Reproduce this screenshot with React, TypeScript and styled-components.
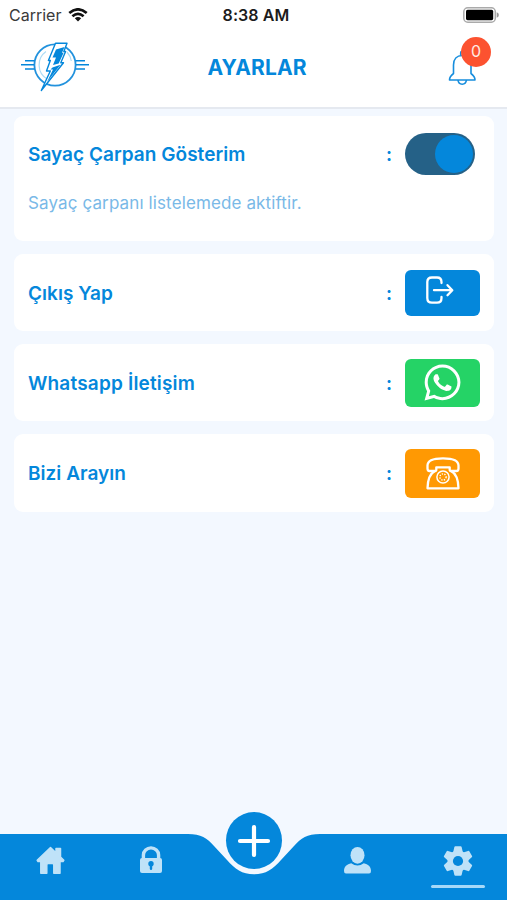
import React from "react";
import styled, { createGlobalStyle } from "styled-components";
import { FaWhatsapp } from "react-icons/fa";

const BLUE = "#0487db";
const PAGE = "#f3f8ff";
const PALE = "#bfe2f8";

const GlobalStyle = createGlobalStyle`
  *, *::before, *::after { box-sizing: border-box; }
  body { margin: 0; background: ${PAGE}; font-family: Inter, "Liberation Sans", sans-serif; }
  svg { display: block; }
`;

const Screen = styled.div`
  display: flex;
  flex-direction: column;
  width: 507px;
  height: 900px;
  overflow: hidden;
  background: ${PAGE};
`;

const StatusBar = styled.div`
  display: grid;
  grid-template-columns: 1fr auto 1fr;
  align-items: center;
  height: 28px;
  padding: 1px 8px 0 9px;
  background: #fff;
  color: #1c1c1c;
`;

const Carrier = styled.div`
  display: flex;
  align-items: center;
  gap: 7px;
  font-size: 16px;
  line-height: 20px;
  color: #3a3a3a;
`;

const Clock = styled.div`
  padding-left: 4px;
  font-size: 16px;
  line-height: 20px;
  font-weight: 600;
  letter-spacing: 0.1px;
`;

const BatterySlot = styled.div`
  display: flex;
  justify-content: flex-end;
`;

const Header = styled.header`
  display: grid;
  grid-template-columns: 100px 1fr 100px;
  align-items: center;
  height: 81px;
  border-bottom: 2px solid #e5e9f0;
  background: #fff;
`;

const Logo = styled.div`
  padding: 0 0 1px 20px;
`;

const Title = styled.h1`
  margin: 0;
  padding: 1px 0 0 7px;
  text-align: center;
  font-size: 21px;
  line-height: 26px;
  font-weight: 700;
  letter-spacing: 0.1px;
  color: ${BLUE};
`;

const BellButton = styled.div`
  position: relative;
  height: 50px;
  padding: 7px 0 0 41px;
`;

const Badge = styled.span`
  position: absolute;
  left: 54px;
  top: -6px;
  width: 30px;
  height: 30px;
  border-radius: 50%;
  background: #fc5230;
  color: #ffeae4;
  font-size: 16px;
  line-height: 29px;
  text-align: center;
`;

const List = styled.main`
  display: flex;
  flex: 1;
  flex-direction: column;
  gap: 13px;
  padding: 7px 13px 0 14px;
`;

const Card = styled.section<{ $height: number }>`
  display: flex;
  flex-direction: column;
  height: ${(p) => p.$height}px;
  padding: 0 14px;
  border-radius: 9px;
  background: #fff;
`;

const Row = styled.div<{ $height?: number }>`
  display: flex;
  align-items: center;
  height: ${(p) => p.$height ?? 77}px;
`;

const Label = styled.span<{ $spacing?: number }>`
  flex: 1;
  padding-top: 2px;
  font-size: 19px;
  line-height: 24px;
  font-weight: 600;
  letter-spacing: ${(p) => p.$spacing ?? 0.04}px;
  color: ${BLUE};
`;

const Colon = styled.span`
  width: 19px;
  padding-top: 2px;
  font-size: 18px;
  line-height: 24px;
  font-weight: 700;
  color: ${BLUE};
`;

const Note = styled.p`
  margin: 0;
  font-size: 17px;
  line-height: 22px;
  letter-spacing: 0.12px;
  color: #79b9e7;
`;

const ControlSlot = styled.div`
  width: 75px;
`;

const Toggle = styled.div`
  display: flex;
  justify-content: flex-end;
  align-items: center;
  width: 70px;
  height: 42px;
  padding: 2px;
  border-radius: 21px;
  background: #256187;
`;

const Knob = styled.div`
  width: 38px;
  height: 38px;
  border-radius: 50%;
  background: ${BLUE};
`;

const Action = styled.div<{ $color: string; $height: number }>`
  display: flex;
  align-items: center;
  justify-content: center;
  width: 75px;
  height: ${(p) => p.$height}px;
  border-radius: 6px;
  background: ${(p) => p.$color};
  color: #fff;
`;

const LogoutGlyph = styled.div`
  padding: 0 7px 5px 0;
`;

const Nav = styled.nav`
  position: relative;
  display: grid;
  grid-template-columns: 101px 99px 108px 99px 102px;
  height: 66px;
  background: ${BLUE};
`;

const NavItem = styled.div`
  display: flex;
  flex-direction: column;
  align-items: center;
  gap: 8px;
  padding-top: 12px;
`;

const ActiveItem = styled(NavItem)`
  padding-top: 11px;
`;

const ActiveLine = styled.div`
  width: 54px;
  height: 3px;
  border-radius: 2px;
  background: #a6d8f8;
`;

const Notch = styled.svg`
  position: absolute;
  left: 184px;
  top: -1px;
`;

const AddButton = styled.div`
  position: absolute;
  left: 226px;
  top: -22px;
  display: flex;
  align-items: center;
  justify-content: center;
  width: 56px;
  height: 57px;
  border-radius: 50%;
  background: ${BLUE};
`;

const WifiIcon = () => (
  <svg width="20" height="14" viewBox="0 0 20 14" fill="none" stroke="#111" strokeWidth="2.7">
    <path d="M1.3 5.1Q10-2.4 18.7 5.1M4.4 8.2Q10 3.5 15.6 8.2" />
    <path d="M10 13.4L6.8 10.3Q10 7.8 13.2 10.3Z" fill="#111" stroke="none" />
  </svg>
);

const BatteryIcon = () => (
  <svg width="37" height="16" viewBox="0 0 37 16">
    <rect x="1.8" y="0.8" width="31.5" height="14.4" rx="4" fill="#fff" stroke="#aaa" strokeWidth="1.5" />
    <rect x="4" y="2.8" width="27.2" height="10.4" rx="1.6" fill="#000" />
    <path d="M34.7 5.2Q36.9 6 36.9 8T34.7 10.8Z" fill="#999" />
  </svg>
);

const BoltLogo = () => (
  <svg width="70" height="50" viewBox="20 42 70 50" fill="none" stroke={BLUE}>
    <circle cx="55" cy="65" r="20.6" strokeWidth="1.8" stroke="#2292dd" />
    <path d="M47 79A16.5 16.5 0 0 1 46 51.5M67 52A16.5 16.5 0 0 1 71.3 61" stroke="#addcf5" strokeWidth="1.2" />
    <path d="M25 60.7H34.5M21 64.8H34M25 68.9H34.5M75.8 60.7H85M76 64.8H89M75.8 68.9H85" strokeWidth="1.5" />
    <path d="M55.5 43.3H67L63.8 51.5H65.6L60.8 62.8H63.5L41.3 90.5L50.3 71H46.5L50.3 60.5H48.4Z" fill="#fff" strokeWidth="1.4" strokeLinejoin="round" />
    <path d="M56 49.5L64.5 47L62 52.8H63.6L58.7 63.5L53 65L56 57.5H52.5ZM52.5 67.5L60.5 64.8L47 82L53 69.5H50.5Z" fill={BLUE} stroke="none" />
  </svg>
);

const BellIcon = () => (
  <svg width="28" height="36" viewBox="448 50 28 36" fill="none" stroke="#168ddd" strokeWidth="1.6" strokeLinejoin="round">
    <path d="M449.5 80H475Q475 76.5 471 73.5V64.5C471 58 467.5 55.5 462.2 55.5S453.5 59 453.5 65V73.5Q449.5 76.5 449.5 80Z" />
    <path d="M460.7 55.5V52.7Q460.7 51.2 462.2 51.2T463.7 52.7V55.5M458 80Q458.4 84.2 462.2 84.2T466.4 80" />
  </svg>
);

const LogoutIcon = () => (
  <svg width="30" height="30" viewBox="424 275 30 30" fill="none" stroke="#fff" strokeWidth="2.3" strokeLinecap="round" strokeLinejoin="round">
    <path d="M441.5 283V282Q441.5 277.5 437 277.5H432Q427.3 277.5 427.3 282V298Q427.3 302.7 432 302.7H437Q441.5 302.7 441.5 298V297M434 290.2H452M447.5 285.2L452.3 290.2L447.5 295.2" />
  </svg>
);

const PhoneIcon = () => (
  <svg width="36" height="36" viewBox="425 455.5 36 36" fill="none" stroke="#fff" strokeWidth="2.3" strokeLinejoin="round">
    <path d="M432 471.5H429.5Q427.5 471.5 427.5 469V466C427.5 461 434 458.8 443 458.8S458.5 461 458.5 466V469Q458.5 471.5 456.5 471.5H451Q449.7 471.5 449.7 470V467.8H436.3V470Q436.3 471.5 435 471.5Z" />
    <path d="M435 471.5C430 474 427.7 480 427.5 488.8H458.5C458.3 480 456 474 451 471.5" />
    <circle cx="443" cy="477.5" r="6.1" strokeWidth="1.5" />
    <circle cx="443" cy="477.5" r="3.1" strokeWidth="1.4" strokeDasharray="1.3 1.3" />
  </svg>
);

const HomeIcon = () => (
  <svg width="29" height="29" viewBox="0 0 29 29" fill={PALE} stroke={PALE} strokeWidth="1.5" strokeLinejoin="round">
    <path d="M14.5 1.6L1.2 14.3L2 15.5H4.8V27.2H10.8V19Q10.8 17.6 12 17.6H16.5Q17.8 17.6 17.8 19V27.2H24V15.5H27L27.8 14.3L24.5 11V2.6H20V6.7Z" />
  </svg>
);

const LockIcon = () => (
  <svg width="24" height="28" viewBox="0 0 24 28">
    <path d="M4.4 14V9A7.6 7.1 0 0 1 19.6 9V14" fill="none" stroke={PALE} strokeWidth="3.4" />
    <rect x="1" y="12" width="22" height="15" rx="2" fill={PALE} />
    <circle cx="12" cy="17.8" r="2.7" fill={BLUE} />
    <path d="M12 18V22.7" stroke={BLUE} strokeWidth="2.4" strokeLinecap="round" />
  </svg>
);

const UserIcon = () => (
  <svg width="29" height="29" viewBox="0 0 29 29" fill={PALE}>
    <ellipse cx="14.5" cy="9.3" rx="7" ry="8.4" />
    <path d="M8.2 17.2Q14.5 21.6 20.8 17.2C25 18 28 20.5 28 25Q28 27.5 26 27.5H3Q1 27.5 1 25C1 20.5 4 18 8.2 17.2Z" />
  </svg>
);

const GearIcon = () => (
  <svg width="32" height="32" viewBox="-16 -16 32 32" fill={PALE}>
    <circle r="10.5" />
    {[0, 60, 120].map((angle) => (
      <path
        key={angle}
        transform={`rotate(${angle})`}
        d="M-2.6 -14.7H2.6Q3.5 -14.7 3.7 -13.7L5 -8V8L3.7 13.7Q3.5 14.7 2.6 14.7H-2.6Q-3.5 14.7 -3.7 13.7L-5 8V-8L-3.7 -13.7Q-3.5 -14.7 -2.6 -14.7Z"
      />
    ))}
    <circle r="5.1" fill={BLUE} />
  </svg>
);

export default function App() {
  return (
    <>
      <GlobalStyle />
      <Screen>
        <StatusBar>
          <Carrier>
            <span>Carrier</span>
            <WifiIcon />
          </Carrier>
          <Clock>8:38 AM</Clock>
          <BatterySlot>
            <BatteryIcon />
          </BatterySlot>
        </StatusBar>
        <Header>
          <Logo>
            <BoltLogo />
          </Logo>
          <Title>AYARLAR</Title>
          <BellButton>
            <BellIcon />
            <Badge>0</Badge>
          </BellButton>
        </Header>
        <List>
          <Card $height={125}>
            <Row $height={76}>
              <Label>Sayaç Çarpan Gösterim</Label>
              <Colon>:</Colon>
              <ControlSlot>
                <Toggle>
                  <Knob />
                </Toggle>
              </ControlSlot>
            </Row>
            <Note>Sayaç çarpanı listelemede aktiftir.</Note>
          </Card>
          <Card $height={77}>
            <Row>
              <Label>Çıkış Yap</Label>
              <Colon>:</Colon>
              <Action $color={BLUE} $height={46}>
                <LogoutGlyph>
                  <LogoutIcon />
                </LogoutGlyph>
              </Action>
            </Row>
          </Card>
          <Card $height={77}>
            <Row $height={78}>
              <Label $spacing={0.18}>Whatsapp İletişim</Label>
              <Colon>:</Colon>
              <Action $color="#25d366" $height={48}>
                <FaWhatsapp size={41} />
              </Action>
            </Row>
          </Card>
          <Card $height={78}>
            <Row $height={79}>
              <Label>Bizi Arayın</Label>
              <Colon>:</Colon>
              <Action $color="#ff9903" $height={49}>
                <PhoneIcon />
              </Action>
            </Row>
          </Card>
        </List>
        <Nav>
          <Notch width="140" height="44" viewBox="184 833 140 44">
            <path
              d="M184 833V834H188C201 834 207 838 214 846L227 860C235 869 242 874.3 254 874.3S273 869 281 860L294 846C301 838 307 834 320 834H324V833Z"
              fill={PAGE}
            />
          </Notch>
          <NavItem>
            <HomeIcon />
          </NavItem>
          <NavItem>
            <LockIcon />
          </NavItem>
          <AddButton>
            <svg width="34" height="34" viewBox="0 0 34 34" stroke="#fff" strokeWidth="4.2" strokeLinecap="round">
              <path d="M17 3V31M3 17H31" />
            </svg>
          </AddButton>
          <span />
          <NavItem>
            <UserIcon />
          </NavItem>
          <ActiveItem>
            <GearIcon />
            <ActiveLine />
          </ActiveItem>
        </Nav>
      </Screen>
    </>
  );
}
